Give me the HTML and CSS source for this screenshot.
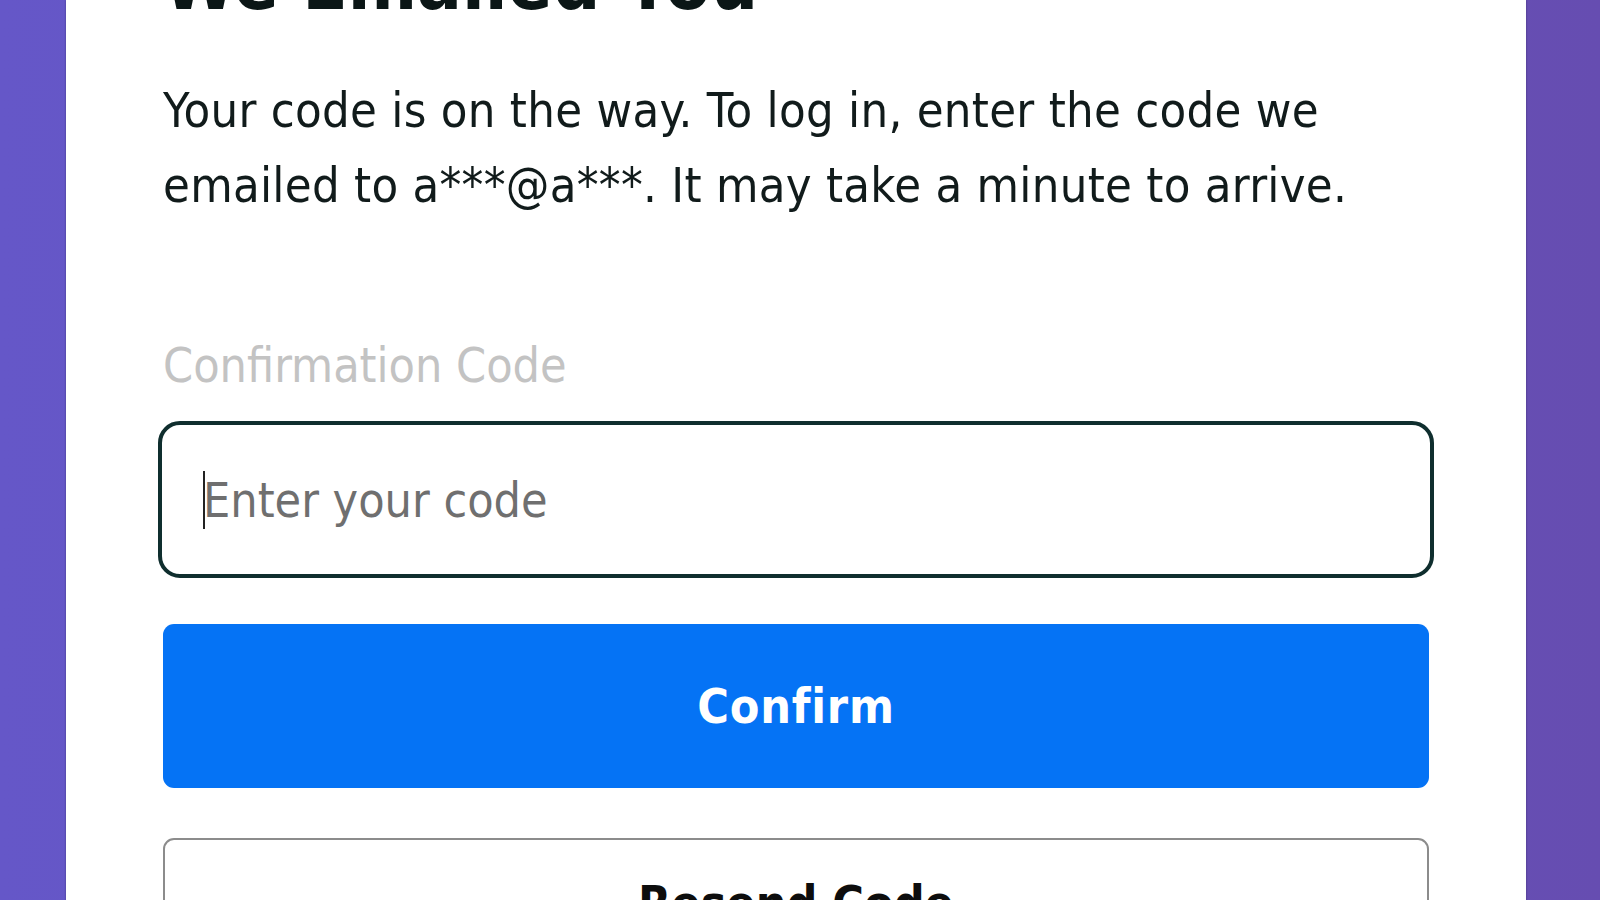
FILE: index.html
```html
<!DOCTYPE html>
<html lang="en">
<head>
<meta charset="utf-8">
<title>We Emailed You</title>
<link rel="stylesheet" href="styles.css">
</head>
<body>
  <main class="card">
    <h1 class="title">We Emailed You</h1>
    <p class="lead">Your code is on the way. To log in, enter the code we emailed to a***@a***. It may take a minute to arrive.</p>
    <label class="label" for="code">Confirmation Code</label>
    <div class="field">
      <span class="caret"></span>
      <input class="input" id="code" type="text" placeholder="Enter your code">
    </div>
    <button class="btn btn-primary" type="button">Confirm</button>
    <button class="btn btn-secondary" type="button">Resend Code</button>
  </main>
</body>
</html>
```

FILE: styles.css
```css
html, body {
  margin: 0;
  height: 100%;
}

body {
  overflow: hidden;
  background: linear-gradient(90deg, #6557c8 0%, #6652bd 60%, #664db1 100%);
  padding-left: 66px;
  font-family: "DejaVu Sans Condensed", "DejaVu Sans", sans-serif;
  font-stretch: condensed;
  color: #0f1b1b;
}

.card {
  width: 1460px;
  min-height: 1100px;
  box-sizing: border-box;
  padding: 0 97px;
  background: #ffffff;
  box-shadow: 0 0 2px rgba(0, 0, 0, 0.35);
  display: flex;
  flex-direction: column;
}

.title {
  margin: -60px 0 0;
  font-size: 74px;
  line-height: 86px;
  font-weight: 700;
  color: #0b1616;
}

.lead {
  margin: 47px 0 0;
  font-size: 48.5px;
  line-height: 75px;
  letter-spacing: 0.28px;
  color: #111b1b;
}

.label {
  margin-top: 113px;
  font-size: 48px;
  line-height: 58px;
  color: #c3c3c3;
}

.field {
  position: relative;
  margin: 27px -5px 0;
}

.caret {
  position: absolute;
  left: 45px;
  top: 50px;
  width: 2px;
  height: 58px;
  background: #222;
}

.input {
  display: block;
  width: 100%;
  height: 157px;
  box-sizing: border-box;
  border: 4px solid #0f2e2e;
  border-radius: 22px;
  padding: 0 0 0 41px;
  font-family: inherit;
  font-stretch: condensed;
  font-size: 48px;
  color: #111b1b;
  background: #fff;
  outline: none;
}

.input::placeholder {
  color: #6f6f6f;
}

.btn {
  display: block;
  width: 100%;
  box-sizing: border-box;
  font-family: inherit;
  font-stretch: condensed;
  font-weight: 700;
  font-size: 48px;
  border-radius: 11px;
  cursor: pointer;
}

.btn-primary {
  margin-top: 46px;
  height: 164px;
  border: none;
  background: #0573f5;
  color: #ffffff;
  letter-spacing: 0.8px;
}

.btn-secondary {
  margin-top: 50px;
  height: 130px;
  border: 2px solid #8c8c8c;
  background: #ffffff;
  color: #0d0d0d;
}
```
